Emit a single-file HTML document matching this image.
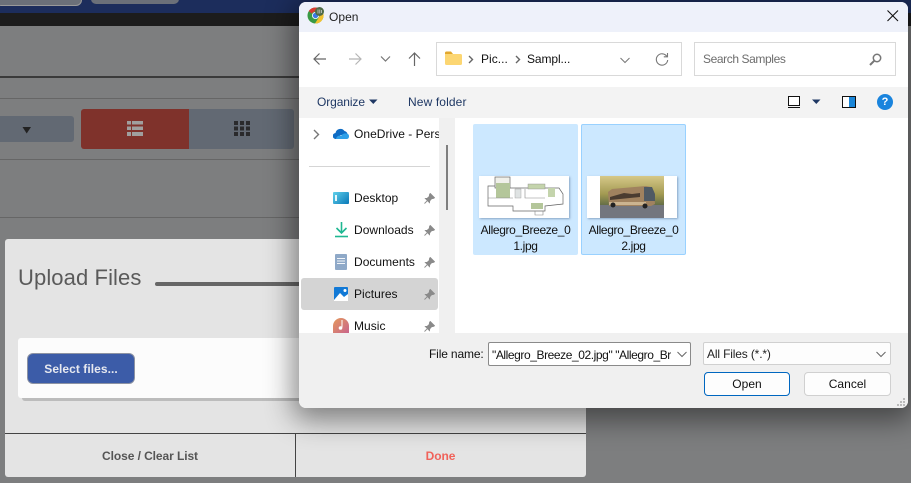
<!DOCTYPE html>
<html><head><meta charset="utf-8"><style>
html,body{margin:0;padding:0}
body{width:911px;height:483px;position:relative;overflow:hidden;background:#7d7e7f;font-family:"Liberation Sans",sans-serif}
div,span,svg{position:absolute;box-sizing:border-box}
.t{white-space:nowrap;font-size:12px;color:#111;letter-spacing:.03px;line-height:16px}
.pin{left:424px;width:11px;height:11px}
</style></head><body>
<!-- page behind -->
<div style="left:0;top:0;width:911px;height:13px;background:#1c2d5c"></div>
<div style="left:-5px;top:-6px;width:87px;height:12px;background:#6b7079;border:1px solid #999;border-radius:6px"></div>
<div style="left:91px;top:-6px;width:88px;height:10px;background:#6b7079;border-radius:5px"></div>
<div style="left:0;top:13px;width:911px;height:13px;background:#1c1c1c"></div>
<div style="left:0;top:76px;width:300px;height:2px;background:#3a3a3a"></div>
<div style="left:0;top:98px;width:300px;height:1px;background:#666"></div>
<div style="left:0;top:159px;width:300px;height:1px;background:#666"></div>
<div style="left:0;top:217px;width:300px;height:1px;background:#666"></div>
<div style="left:-6px;top:116px;width:80px;height:26px;background:#626973;border-radius:3px"></div>
<svg style="left:22px;top:127px" width="10" height="7"><path d="M0.5 0H9L4.7 6.5Z" fill="#222"/></svg>
<div style="left:81px;top:109px;width:108px;height:40px;background:#7f322b;border-radius:3px 0 0 3px"></div>
<div style="left:189px;top:109px;width:105px;height:40px;background:#626973;border-radius:0 3px 3px 0"></div>
<svg style="left:127px;top:121px" width="16" height="15"><path d="M0 0h4v3.500H0zM5 0h11v3.500H5zM0 5.500h4V9H0zM5 5.500h11V9H5zM0 11h4v4H0zM5 11h11v4H5z" fill="#a09f9e"/></svg>
<svg style="left:234px;top:121px" width="16" height="15"><path d="M0 0h4v4H0zM6 0h4v4H6zM12 0h4v4h-4zM0 5.500h4v4H0zM6 5.500h4v4H6zM12 5.500h4v4h-4zM0 11h4v4H0zM6 11h4v4H6zM12 11h4v4h-4z" fill="#2a2a2c"/></svg>

<!-- upload modal -->
<div style="left:5px;top:239px;width:581px;height:238px;background:#e4e4e4;border-radius:3px"></div>
<div class="t" style="left:18px;top:264px;font-size:22px;line-height:28px;color:#5a5a5a;letter-spacing:.1px">Upload Files</div>
<div style="left:155px;top:282px;width:300px;height:4px;background:#666;border-radius:2px"></div>
<div style="left:18px;top:338px;width:554px;height:60px;background:#fcfcfc;border-radius:3px;box-shadow:4px 3px 0 #bcbcbc"></div>
<div style="left:27px;top:353px;width:108px;height:31px;background:#3c5ca8;border:1px solid #8d93a3;border-radius:6px"></div>
<div class="t" style="left:27px;top:361px;width:108px;text-align:center;font-weight:bold;color:#e6e8ef;letter-spacing:.05px">Select files...</div>
<div style="left:5px;top:433px;width:581px;height:1px;background:#444"></div>
<div style="left:295px;top:433px;width:1px;height:44px;background:#444"></div>
<div class="t" style="left:5px;top:448px;width:290px;text-align:center;font-weight:bold;color:#555;letter-spacing:-.08px">Close / Clear List</div>
<div class="t" style="left:296px;top:448px;width:289px;text-align:center;font-weight:bold;color:#f0625a;letter-spacing:-.05px">Done</div>

<!-- dialog -->
<div style="left:299px;top:2px;width:609px;height:406px;background:#fff;border-radius:7px;overflow:hidden;box-shadow:0 6px 28px 6px rgba(0,0,0,.45)"></div>
<div style="left:299px;top:2px;width:609px;height:30px;background:#eef1fa;border-radius:7px 7px 0 0"></div>
<svg style="left:307px;top:7px" width="17" height="17" viewBox="0 0 17 17"><circle cx="8.500" cy="8.500" r="8" fill="#3a9a44"/><path d="M8.500.5A8 8 0 0 1 15.500 4.500H8.500A4 4 0 0 0 4.900 6.800L1.800 4A8 8 0 0 1 8.500.5Z" fill="#d93a30"/><path d="M15.500 4.500A8 8 0 0 1 8 16.500L11.800 10.500A4 4 0 0 0 11.500 5Z" fill="#f2c230"/><circle cx="8.500" cy="8.500" r="3.500" fill="#fff"/><circle cx="8.500" cy="8.500" r="2.700" fill="#3b78e7"/><circle cx="12.500" cy="4.500" r="4.500" fill="#4f6b47"/><path d="M11 2.500v4M12.800 2.500v4M14.400 3v3" stroke="#ccc" stroke-width=".8"/></svg>
<div class="t" style="left:329px;top:9px;color:#222">Open</div>
<svg style="left:887px;top:10px" width="12" height="12"><path d="M.5.5l10.500 10.500M11 .5L.5 11" stroke="#111" stroke-width="1.100" fill="none"/></svg>

<svg style="left:312px;top:51px" width="16" height="16"><path d="M14 8H2M7.500 2.500L2 8l5.500 5.500" stroke="#666" stroke-width="1.200" fill="none"/></svg>
<svg style="left:347px;top:51px" width="16" height="16"><path d="M2 8h12M8.500 2.500L14 8l-5.500 5.500" stroke="#b5b5b5" stroke-width="1.200" fill="none"/></svg>
<svg style="left:380px;top:55px" width="11" height="8"><path d="M1 1.500l4.500 4.500L10 1.500" stroke="#777" stroke-width="1.200" fill="none"/></svg>
<svg style="left:407px;top:51px" width="15" height="16"><path d="M7.500 15V2M2 7.500L7.500 2 13 7.500" stroke="#666" stroke-width="1.200" fill="none"/></svg>

<div style="left:436px;top:42px;width:246px;height:34px;border:1px solid #d9d9d9;background:#fff"></div>
<svg style="left:445px;top:51px" width="17" height="14"><path d="M0 2a1.500 1.500 0 0 1 1.500-1.500H6L8 3H0Z" fill="#e2a72e"/><path d="M0 3h15.500A1.500 1.500 0 0 1 17 4.500v8A1.500 1.500 0 0 1 15.500 14h-14A1.500 1.500 0 0 1 0 12.500Z" fill="#fcd672"/></svg>
<svg style="left:468px;top:55px" width="6" height="9"><path d="M1 1l3.500 3.500L1 8" stroke="#666" stroke-width="1.400" fill="none"/></svg>
<div class="t" style="left:481px;top:51px">Pic...</div>
<svg style="left:515px;top:55px" width="6" height="9"><path d="M1 1l3.500 3.500L1 8" stroke="#666" stroke-width="1.400" fill="none"/></svg>
<div class="t" style="left:527px;top:51px;letter-spacing:-.1px">Sampl...</div>
<svg style="left:620px;top:57px" width="10" height="7"><path d="M.5 1l4.500 4.500L9.500 1" stroke="#777" stroke-width="1" fill="none"/></svg>
<svg style="left:655px;top:52px" width="14" height="15"><path d="M11.700 4.200A5.700 5.700 0 1 0 12.700 8M12.500 1v3.800H8.800" stroke="#777" stroke-width="1.100" fill="none"/></svg>

<div style="left:694px;top:42px;width:202px;height:34px;border:1px solid #d9d9d9;background:#fff"></div>
<div class="t" style="left:703px;top:51px;color:#6d6d6d;letter-spacing:-.4px">Search Samples</div>
<svg style="left:869px;top:53px" width="13" height="13"><circle cx="8" cy="5" r="3.700" stroke="#777" stroke-width="1.500" fill="none"/><path d="M5.300 7.700L1 12" stroke="#777" stroke-width="2"/></svg>

<div style="left:299px;top:87px;width:609px;height:31px;background:#f3f3f3"></div>
<div class="t" style="left:317px;top:94px;color:#1f3864;letter-spacing:-.1px">Organize</div>
<svg style="left:369px;top:99px" width="9" height="6"><path d="M0 .5h8.500L4.300 5Z" fill="#1f3864"/></svg>
<div class="t" style="left:408px;top:94px;color:#1f3864;letter-spacing:.12px">New folder</div>
<div style="left:788px;top:96px;width:12px;height:10px;border:1px solid #111;background:#fff"></div>
<div style="left:788px;top:107px;width:12px;height:1px;background:#111"></div>
<svg style="left:812px;top:99px" width="9" height="6"><path d="M0 .5h8.500L4.300 5Z" fill="#1f3864"/></svg>
<div style="left:842px;top:96px;width:14px;height:12px;border:1px solid #111;background:linear-gradient(90deg,#fff 50%,#1a86d8 50%)"></div>
<div style="left:877px;top:94px;width:16px;height:16px;border-radius:50%;background:#1a84dd;color:#fff;font:bold 11px/16px 'Liberation Sans',sans-serif;text-align:center">?</div>

<!-- nav -->
<div style="left:439px;top:118px;width:16px;height:215px;background:#f0f0f0"></div>
<div style="left:446px;top:145px;width:2px;height:65px;background:#7f7f7f"></div>
<svg style="left:313px;top:129px" width="7" height="11"><path d="M1 1l4.500 4.500L1 10" stroke="#777" stroke-width="1.400" fill="none"/></svg>
<svg style="left:333px;top:128px" width="17" height="11"><path d="M3 11a3 3 0 0 1-.5-6A5 5 0 0 1 11.500 3a3.700 3.700 0 0 1 3 4H8Z" fill="#0f6cc4"/><path d="M3 11h11a2.800 2.800 0 0 0 .5-5.200C12 4.500 9 6 8 8 6 7 3.500 8.500 3 11Z" fill="#2fa0e8"/></svg>
<div class="t" style="left:354px;top:126px;width:85px;overflow:hidden">OneDrive - Personal</div>
<div style="left:309px;top:166px;width:121px;height:1px;background:#d5d5d5"></div>
<div style="left:333px;top:192px;width:16px;height:12px;background:linear-gradient(135deg,#5fd0ea,#0a78b8);border-radius:1px"></div>
<div style="left:335px;top:195px;width:2px;height:6px;background:#e6f7fb"></div>
<svg style="left:335px;top:222px" width="13" height="16"><path d="M6.500 0v10M1.500 6l5 5 5-5" stroke="#1fb792" stroke-width="1.600" fill="none"/><path d="M0 14.500h13" stroke="#1fb792" stroke-width="1.600"/></svg>
<div style="left:335px;top:254px;width:12px;height:16px;background:#8fa9c8;border-radius:1px"></div>
<div style="left:337px;top:258px;width:8px;height:7px;background:repeating-linear-gradient(#f2f5f9 0 1px,#8fa9c8 1px 2.500px)"></div>
<div style="left:301px;top:278px;width:137px;height:32px;background:#d4d4d4;border-radius:3px"></div>
<svg style="left:334px;top:287px" width="14" height="14"><rect width="14" height="14" fill="#1179d6" rx="1"/><path d="M0 13L6 6l4 4 4-3v7H0Z" fill="#fff"/><circle cx="11" cy="3.500" r="1.500" fill="#fff"/></svg>
<div style="left:333px;top:318px;width:16px;height:15px;background:linear-gradient(135deg,#e59a5c,#c8648c);border-radius:8px 8px 0 0"></div>
<svg style="left:338px;top:320px" width="7" height="11"><path d="M4 0v7.500" stroke="#fff" stroke-width="1"/><circle cx="2.500" cy="8" r="1.800" fill="#fff"/></svg>
<div class="t" style="left:354px;top:190px">Desktop</div>
<div class="t" style="left:354px;top:222px">Downloads</div>
<div class="t" style="left:354px;top:254px">Documents</div>
<div class="t" style="left:354px;top:286px">Pictures</div>
<div class="t" style="left:354px;top:318px">Music</div>
<svg class="pin" style="top:193px" viewBox="0 0 11 11"><path d="M6.200.5l4.300 4.300-1.200.7-1.700.2-1.900 2.100-.2 1.800L1.400 5.500l1.800-.2 2.100-1.900.2-1.700ZM3.300 7.700L.5 10.500" fill="#8a8a8a" stroke="#8a8a8a" stroke-width=".9"/></svg>
<svg class="pin" style="top:225px" viewBox="0 0 11 11"><path d="M6.200.5l4.300 4.300-1.200.7-1.700.2-1.900 2.100-.2 1.800L1.400 5.500l1.800-.2 2.100-1.900.2-1.700ZM3.300 7.700L.5 10.500" fill="#8a8a8a" stroke="#8a8a8a" stroke-width=".9"/></svg>
<svg class="pin" style="top:257px" viewBox="0 0 11 11"><path d="M6.200.5l4.300 4.300-1.200.7-1.700.2-1.900 2.100-.2 1.800L1.400 5.500l1.800-.2 2.100-1.900.2-1.700ZM3.300 7.700L.5 10.500" fill="#8a8a8a" stroke="#8a8a8a" stroke-width=".9"/></svg>
<svg class="pin" style="top:289px" viewBox="0 0 11 11"><path d="M6.200.5l4.300 4.300-1.200.7-1.700.2-1.900 2.100-.2 1.800L1.400 5.500l1.800-.2 2.100-1.900.2-1.700ZM3.300 7.700L.5 10.500" fill="#8a8a8a" stroke="#8a8a8a" stroke-width=".9"/></svg>
<svg class="pin" style="top:321px" viewBox="0 0 11 11"><path d="M6.200.5l4.300 4.300-1.200.7-1.700.2-1.900 2.100-.2 1.800L1.400 5.500l1.800-.2 2.100-1.900.2-1.700ZM3.300 7.700L.5 10.500" fill="#8a8a8a" stroke="#8a8a8a" stroke-width=".9"/></svg>

<!-- files -->
<div style="left:473px;top:124px;width:105px;height:131px;background:#cce8ff;border-radius:2px"></div>
<div style="left:581px;top:124px;width:105px;height:131px;background:#cce8ff;border:1px solid #99d1ff;border-radius:2px"></div>
<div style="left:479px;top:176px;width:90px;height:42px;background:#fff;box-shadow:1px 1px 2px rgba(70,100,140,.5)"></div>
<svg style="left:479px;top:176px" width="90" height="42">
<path d="M9 10H30V12H70L80 12 84 18 84 28 66 30V35H34V30H9Z" fill="#fff" stroke="#666" stroke-width=".7"/>
<rect x="16" y="1" width="15" height="11" fill="#f0f0ea" stroke="#666" stroke-width=".7"/>
<rect x="17" y="7" width="14" height="15" fill="#b4c69a"/>
<rect x="49" y="8" width="17" height="5" fill="#c4d4ac" stroke="#888" stroke-width=".4"/>
<rect x="52" y="27" width="12" height="6" fill="#b4c69a"/>
<rect x="69" y="12" width="7" height="9" fill="#c4d4ac"/>
<rect x="36" y="13" width="6" height="9" fill="#dfe3e3" stroke="#999" stroke-width=".4"/>
<path d="M46 13v9H66M9 22h25M56 35v4h8v-4" stroke="#888" stroke-width=".6" fill="none"/></svg>
<div style="left:587px;top:176px;width:90px;height:42px;background:#fff;box-shadow:1px 1px 2px rgba(70,100,140,.5)"></div>
<svg style="left:600px;top:176px" width="64" height="42">
<defs><linearGradient id="g" x1="0" y1="0" x2="0" y2="1"><stop offset="0" stop-color="#d6c888"/><stop offset=".6" stop-color="#a39a52"/><stop offset="1" stop-color="#5f6a45"/></linearGradient></defs>
<rect width="64" height="30" fill="url(#g)"/><rect y="29" width="64" height="13" fill="#73767e"/>
<path d="M8 16l4-3 34-3 5 1 3 5 1 12-4 2H9Z" fill="#a0825f"/><path d="M44 11l8 0 3 7v7H44Z" fill="#4f5a64"/><path d="M10 21l14-4 8 1 8-1v4l-30 3Z" fill="#4a3c30"/><path d="M9 26h37v3H9Z" fill="#cbb490"/>
<circle cx="13" cy="29" r="2.500" fill="#222"/><circle cx="45" cy="30" r="2.500" fill="#222"/></svg>
<div class="t" style="left:473px;top:222px;width:105px;text-align:center;letter-spacing:-.35px;white-space:normal">Allegro_Breeze_0<br>1.jpg</div>
<div class="t" style="left:581px;top:222px;width:105px;text-align:center;letter-spacing:-.35px;white-space:normal">Allegro_Breeze_0<br>2.jpg</div>

<!-- bottom -->
<div style="left:299px;top:333px;width:609px;height:75px;background:#f0f0f0;border-radius:0 0 7px 7px"></div>
<div class="t" style="left:429px;top:346px;letter-spacing:-.15px">File name:</div>
<div style="left:488px;top:342px;width:203px;height:24px;background:#fff;border:1px solid #8a8a8a;border-radius:2px"></div>
<div class="t" style="left:492px;top:347px;width:179px;overflow:hidden;letter-spacing:-.42px">"Allegro_Breeze_02.jpg" "Allegro_Breeze_01.jpg"</div>
<svg style="left:677px;top:351px" width="10" height="7"><path d="M.5 1l4.500 4.500L9.500 1" stroke="#666" stroke-width="1" fill="none"/></svg>
<div style="left:703px;top:342px;width:188px;height:23px;background:#fdfdfd;border:1px solid #d0d0d0;border-radius:2px"></div>
<div class="t" style="left:707px;top:346px;color:#222;letter-spacing:-.15px">All Files (*.*)</div>
<svg style="left:876px;top:351px" width="10" height="7"><path d="M.5 1l4.500 4.500L9.500 1" stroke="#666" stroke-width="1" fill="none"/></svg>
<div style="left:704px;top:372px;width:86px;height:24px;background:#fdfdfd;border:1px solid #0067c0;border-radius:4px"></div>
<div class="t" style="left:704px;top:376px;width:86px;text-align:center">Open</div>
<div style="left:804px;top:372px;width:87px;height:24px;background:#fdfdfd;border:1px solid #d0d0d0;border-radius:4px"></div>
<div class="t" style="left:804px;top:376px;width:87px;text-align:center">Cancel</div>
<svg style="left:897px;top:398px" width="9" height="9"><path d="M6 0h2v2H6zM3 3h2v2H3zM6 3h2v2H6zM0 6h2v2H0zM3 6h2v2H3zM6 6h2v2H6z" fill="#bbb"/></svg>
</body></html>
